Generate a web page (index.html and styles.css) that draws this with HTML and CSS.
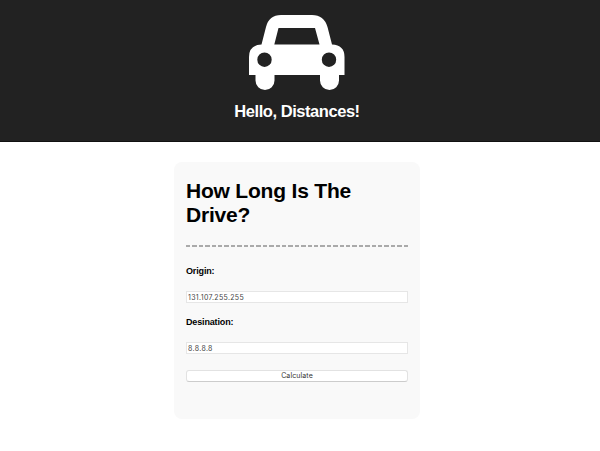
FILE: index.html
```html
<!DOCTYPE html>
<html lang="en">
<head>
<meta charset="utf-8">
<title>Hello, Distances!</title>
<link rel="stylesheet" href="styles.css">
</head>
<body>
<header class="banner">
  <svg class="car" viewBox="0 0 96 75" aria-hidden="true">
    <path fill="#fff" fill-rule="evenodd" d="M32 0H63Q75 0 78.500 12L83 29.5Q95.500 30 95.500 42V60H90V65.500A9.500 9.500 0 0 1 71 65.500V60H25.500V65.500A9.500 9.500 0 0 1 6.500 65.500V60H0V42Q0 30 12.500 29.500L17 12Q20 0 32 0ZM29.500 13L25.300 29.500H70.500L66 13ZM15.500 37.500a7.200 7.200 0 1 0 0 14.400a7.200 7.200 0 1 0 0-14.400ZM80 37.500a7.200 7.200 0 1 0 0 14.400a7.200 7.200 0 1 0 0-14.400Z"/>
  </svg>
  <h2 class="title">Hello, Distances!</h2>
</header>
<main class="card">
  <h1 class="question">How Long Is The Drive?</h1>
  <div class="divider"></div>
  <form class="form">
    <label class="label" for="origin">Origin:</label>
    <input class="field" id="origin" type="text" value="131.107.255.255">
    <label class="label" for="destination">Desination:</label>
    <input class="field" id="destination" type="text" value="8.8.8.8">
    <button class="submit" type="button">Calculate</button>
  </form>
</main>
</body>
</html>
```
FILE: styles.css
```css
* { box-sizing: border-box; }
body {
  margin: 0;
  background: #fff;
  color: #000;
  font-family: "Liberation Sans", Arial, sans-serif;
}
.banner {
  height: 142px;
  padding-top: 15px;
  background: #222;
  border-bottom: 1px solid #111;
  color: #fff;
  text-align: center;
}
.car {
  display: block;
  width: 96px;
  height: 75px;
  margin: 0 auto;
  transform: translateX(-3px);
}
.title {
  margin: 11px 6px 0 0;
  font-size: 16.5px;
  line-height: 20px;
  letter-spacing: -0.45px;
}
.card {
  width: 246px;
  height: 257px;
  margin: 20px 0 0 174px;
  padding: 17px 12px 0;
  border-radius: 8px;
  background: #f9f9f9;
}
.question {
  margin: 0;
  font-size: 21px;
  line-height: 24px;
  letter-spacing: -0.2px;
}
.divider {
  height: 2px;
  margin-top: 18px;
  background: repeating-linear-gradient(90deg, #aaa 0 4.4px, transparent 4.4px 6.4px);
}
.form {
  display: flex;
  flex-direction: column;
}
.label {
  margin-top: 18px;
  font-size: 9px;
  font-weight: bold;
  line-height: 12px;
  letter-spacing: -0.15px;
}
.field {
  width: 100%;
  height: 12px;
  margin: 14px 0 0;
  padding: 0 1px;
  border: 1px solid #e6e6e6;
  background: #fff;
  color: #444;
  font: 7px/10px Inter, sans-serif;
  letter-spacing: 0.33px;
}
.field + .label { margin-top: 13px; }
.field + .submit { margin-top: 16px; }
.submit {
  width: 100%;
  height: 12px;
  padding: 0;
  border: 1px solid #e2e2e2;
  border-bottom-color: #ccc;
  border-radius: 3px;
  background: #fff;
  color: #333;
  font: 7px/10px Inter, sans-serif;
  letter-spacing: 0.1px;
}
```
